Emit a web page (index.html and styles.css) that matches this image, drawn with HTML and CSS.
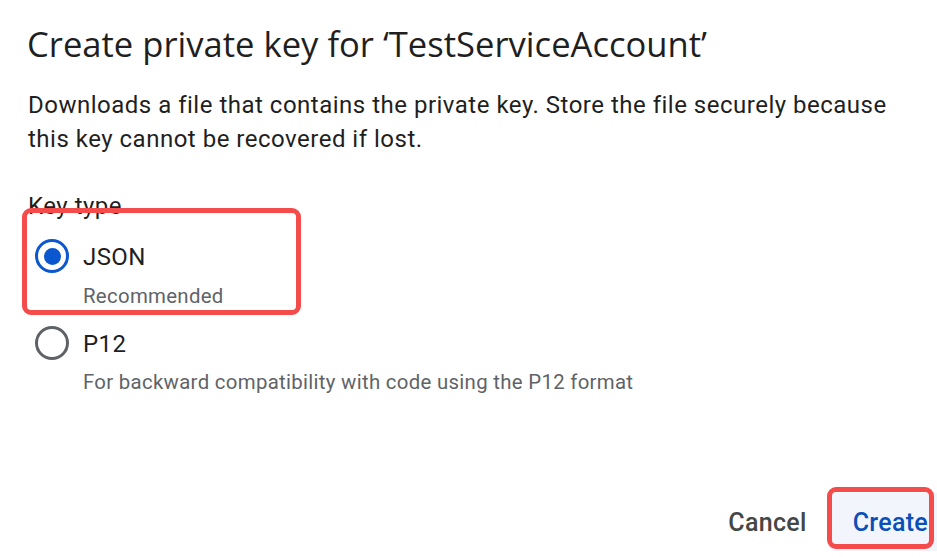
FILE: index.html
```html
<!DOCTYPE html>
<html lang="en">
<head>
<meta charset="utf-8">
<title>Create private key</title>
<link rel="stylesheet" href="styles.css">
</head>
<body>
<div class="dialog">
  <h1 class="title">Create private key for ‘TestServiceAccount’</h1>
  <p class="desc">Downloads a file that contains the private key. Store the file securely because this key cannot be recovered if lost.</p>
  <div class="group-label">Key type</div>
  <div class="option">
    <span class="radio checked"></span>
    <span class="opt-label">JSON</span>
  </div>
  <div class="hint hint-json">Recommended</div>
  <div class="option option-p12">
    <span class="radio"></span>
    <span class="opt-label">P12</span>
  </div>
  <div class="hint">For backward compatibility with code using the P12 format</div>
  <div class="actions">
    <button class="btn btn-cancel">Cancel</button>
    <button class="btn btn-create">Create</button>
  </div>
  <div class="mark mark-json"></div>
  <div class="mark mark-create"></div>
</div>
</body>
</html>
```
FILE: styles.css
```css
html, body {
  margin: 0;
  padding: 0;
  background: #ffffff;
  overflow: hidden;
}
.dialog {
  position: relative;
  width: 937px;
  height: 557px;
  box-sizing: border-box;
  padding: 22px 0 0 28px;
  font-family: Roboto, "Liberation Sans", sans-serif;
  color: #1f1f1f;
}
.title {
  margin: 0 0 0 -1px;
  font-family: "Open Sans", Roboto, sans-serif;
  font-weight: 400;
  font-size: 34.6px;
  line-height: 44px;
  color: #1f1f1f;
  white-space: nowrap;
}
.desc {
  margin: 22px 0 0 0;
  width: 880px;
  font-size: 24px;
  letter-spacing: 0.5px;
  line-height: 34px;
  color: #1f1f1f;
}
.group-label {
  margin-top: 33px;
  font-size: 24px;
  letter-spacing: 0.5px;
  line-height: 34px;
  color: #1f1f1f;
}
.option {
  margin-top: 13px;
  height: 40px;
  display: flex;
  align-items: center;
}
.option-p12 {
  margin-top: 14px;
}
.radio {
  box-sizing: border-box;
  width: 34px;
  height: 34px;
  margin-left: 7px;
  margin-right: 14px;
  border-radius: 50%;
  border: 3.4px solid #5f6368;
  display: flex;
  align-items: center;
  justify-content: center;
}
.radio.checked {
  border-color: #0b57d0;
}
.radio.checked::after {
  content: "";
  width: 17px;
  height: 17px;
  border-radius: 50%;
  background: #0b57d0;
}
.opt-label {
  font-size: 24px;
  letter-spacing: 0.4px;
  line-height: 40px;
  color: #1f1f1f;
  padding-top: 2px;
}
.hint {
  margin-left: 55px;
  margin-top: 6px;
  font-size: 20.4px;
  letter-spacing: 0.3px;
  line-height: 26px;
  color: #5f6368;
}
.hint-json {
  margin-top: 7px;
}
.actions {
  margin-top: 98px;
  display: flex;
  justify-content: flex-end;
}
.btn {
  border: 0;
  background: transparent;
  font-family: Roboto, sans-serif;
  font-weight: 500;
  font-size: 25px;
  letter-spacing: 0.3px;
  height: 58px;
  padding: 0 22px;
  cursor: pointer;
}
.btn-cancel {
  color: #444746;
}
.btn-create {
  color: #0b4fb8;
  background: #f2f6fc;
  padding: 0 9px 0 24px;
  border-radius: 6px 0 0 6px;
}
.mark {
  position: absolute;
  box-sizing: border-box;
  border: 5px solid #f44b4b;
  border-radius: 9px;
}
.mark-json {
  left: 22px;
  top: 208px;
  width: 279px;
  height: 107px;
}
.mark-create {
  left: 827px;
  top: 487px;
  width: 107px;
  height: 62px;
}
```
